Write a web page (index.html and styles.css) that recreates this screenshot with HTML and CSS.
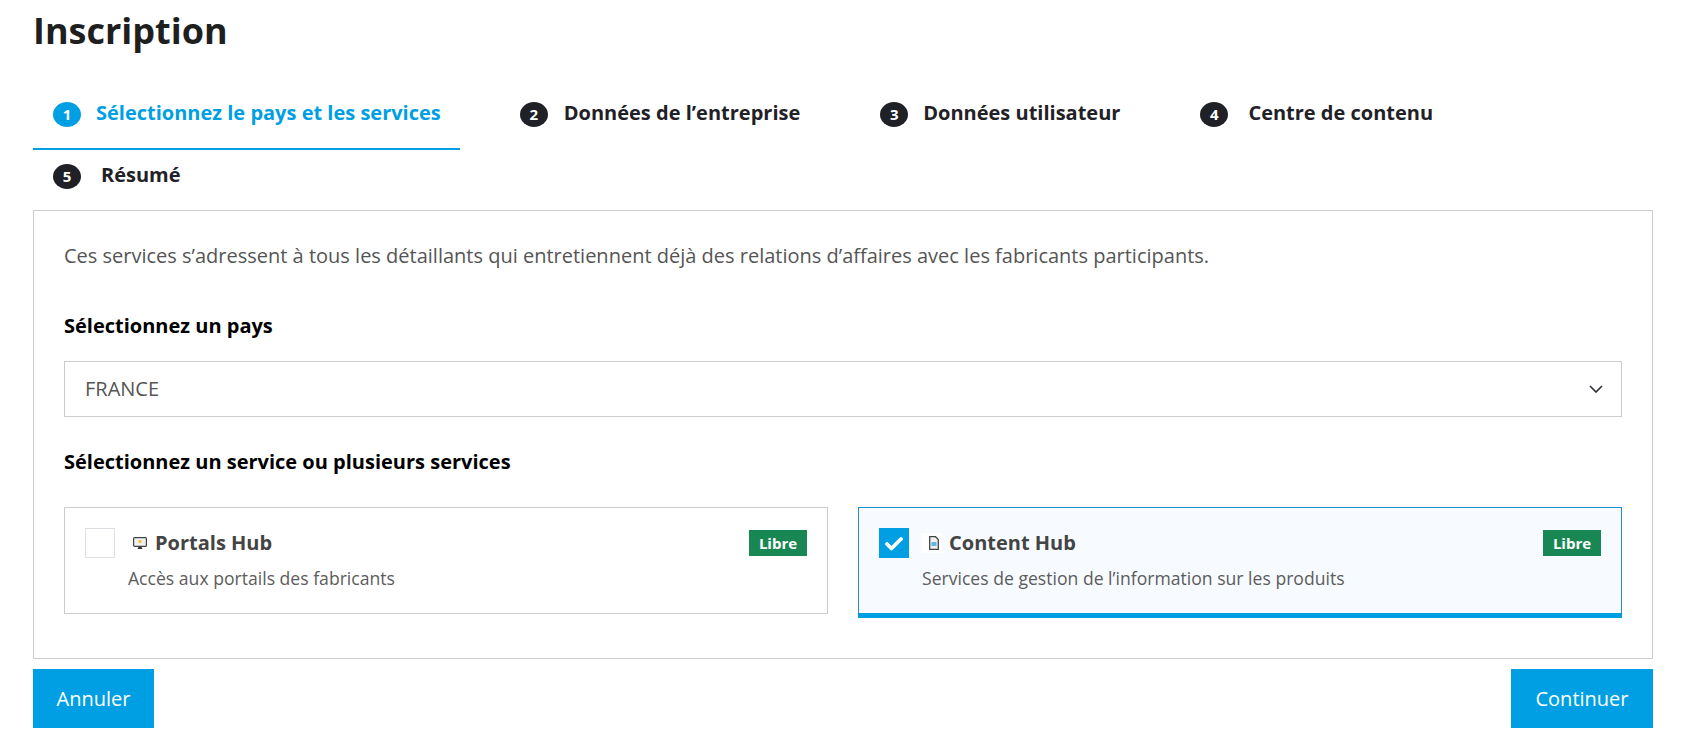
FILE: index.html
```html
<!DOCTYPE html>
<html lang="fr">
<head>
<meta charset="utf-8">
<title>Inscription</title>
<link rel="stylesheet" href="styles.css">
</head>
<body>
<h1 class="title">Inscription</h1>
<nav class="tabs">
  <a class="tab tab-active tab-gap-1"><span class="num">1</span><span class="tab-text">Sélectionnez le pays et les services</span></a>
  <a class="tab tab-gap-2"><span class="num">2</span><span class="tab-text">Données de l’entreprise</span></a>
  <a class="tab tab-gap-3"><span class="num">3</span><span class="tab-text">Données utilisateur</span></a>
  <a class="tab tab-gap-4"><span class="num">4</span><span class="tab-text">Centre de contenu</span></a>
  <a class="tab tab-last tab-gap-4"><span class="num">5</span><span class="tab-text">Résumé</span></a>
</nav>
<main class="panel">
  <p class="intro">Ces services s’adressent à tous les détaillants qui entretiennent déjà des relations d’affaires avec les fabricants participants.</p>
  <h2 class="label">Sélectionnez un pays</h2>
  <div class="select">
    <span class="select-value">FRANCE</span>
    <svg class="chevron" width="14" height="8" viewBox="0 0 14 8"><path d="M1 1l6 6 6-6" fill="none" stroke="#2b2d33" stroke-width="1.6"/></svg>
  </div>
  <h2 class="label label-services">Sélectionnez un service ou plusieurs services</h2>
  <div class="cards">
    <section class="card">
      <span class="check"></span>
      <div class="card-body">
        <div class="card-head">
          <svg class="icon-monitor" width="14" height="12" viewBox="0 0 14 12"><rect x=".6" y=".6" width="12.8" height="8.800" rx="1" fill="#f0f0ee" stroke="#444" stroke-width="1.200"/><rect x="5.500" y="3" width="3" height="3" fill="#f5c242"/><path d="M5.500 10h3l1 2h-5z" fill="#333"/></svg>
          <span class="card-title">Portals Hub</span>
          <span class="badge">Libre</span>
        </div>
        <p class="card-desc">Accès aux portails des fabricants</p>
      </div>
    </section>
    <section class="card card-selected">
      <span class="check check-on"><svg width="18" height="15" viewBox="0 0 18 15"><path d="M2 8l4.500 4.500L16 3" fill="none" stroke="#fff" stroke-width="3.800" stroke-linecap="round" stroke-linejoin="round"/></svg></span>
      <div class="card-body">
        <div class="card-head">
          <span class="icon-doc-box"><svg width="10" height="14" viewBox="0 0 10 14"><path d="M.7.7h5.800l2.800 2.800v9.800H.7z" fill="#f0f0ee" stroke="#444" stroke-width="1.300"/><rect x="2.500" y="6" width="5" height="4" fill="#5fb6e6"/></svg></span>
          <span class="card-title">Content Hub</span>
          <span class="badge">Libre</span>
        </div>
        <p class="card-desc">Services de gestion de l’information sur les produits</p>
      </div>
    </section>
  </div>
</main>
<footer class="actions">
  <button class="btn btn-cancel">Annuler</button>
  <button class="btn btn-next">Continuer</button>
</footer>
</body>
</html>
```
FILE: styles.css
```css
* { box-sizing: border-box; }
html, body { margin: 0; padding: 0; }
body {
  padding: 0 36px 18px 33px;
  font-family: "Open Sans", sans-serif;
  color: #212121;
  background: #fff;
}
.title {
  margin: 0;
  padding-top: 6px;
  font-size: 36px;
  line-height: 49px;
  font-weight: 700;
  color: #1f1f1f;
}
.tabs {
  display: flex;
  flex-wrap: wrap;
  column-gap: 40px;
  margin-top: 33px;
}
.tab {
  display: flex;
  align-items: flex-start;
  height: 62px;
  padding: 14px 20px 0;
  font-size: 20px;
  font-weight: 700;
  color: #1f2126;
  border-bottom: 2px solid transparent;
}
.tab-last { height: 60px; border-bottom: 0; }
.tab-active { padding-right: 19px; color: #009fe3; border-bottom-color: #009fe3; }
.tab-text { line-height: 22px; }
.num {
  display: flex;
  align-items: center;
  justify-content: center;
  width: 28px;
  height: 25px;
  border-radius: 50%;
  background: #1f2126;
  color: #fff;
  font-size: 15px;
  font-weight: 700;
  line-height: 1;
  flex: none;
}
.tab-active .num { background: #009fe3; }
.tab-gap-1 .num { margin-right: 15px; }
.tab-gap-2 .num { margin-right: 16px; }
.tab-gap-3 .num { margin-right: 15px; }
.tab-gap-4 .num { margin-right: 20px; }
.panel {
  height: 449px;
  border: 1px solid #ccc;
  padding: 30px 30px 0;
}
.intro {
  margin: 0;
  font-size: 20px;
  line-height: 30px;
  color: #555;
}
.label {
  margin: 41px 0 0;
  font-size: 20px;
  line-height: 28px;
  font-weight: 700;
  color: #000;
}
.select {
  display: flex;
  align-items: center;
  justify-content: space-between;
  height: 56px;
  margin-top: 21px;
  padding: 0 18px 1px 20px;
  border: 1px solid #ccc;
  font-size: 20px;
  color: #555;
}
.select-value { margin-bottom: 0; }
.label-services { margin-top: 31px; }
.cards {
  display: grid;
  grid-template-columns: 1fr 1fr;
  gap: 30px;
  align-items: start;
  margin-top: 31px;
}
.card {
  display: flex;
  height: 107px;
  padding: 20px;
  border: 1px solid #ccc;
}
.card-selected {
  height: 111px;
  border-color: #1d8fd0;
  border-bottom: 5px solid #009fe3;
  background: #f7fbff;
}
.check {
  display: flex;
  align-items: center;
  justify-content: center;
  flex: none;
  width: 30px;
  height: 30px;
  margin-right: 13px;
  border: 1px solid #dcdfe3;
  background: #fff;
}
.check-on { background: #009fe3; border-color: #009fe3; }
.card-body { flex: 1; min-width: 0; }
.card-head {
  display: flex;
  align-items: center;
  height: 28px;
  margin-top: 1px;
}
.icon-monitor { margin-left: 5px; margin-right: 8px; flex: none; }
.icon-doc-box {
  display: flex;
  align-items: center;
  justify-content: flex-end;
  width: 20px;
  height: 20px;
  padding-right: 3px;
  margin-right: 7px;
  background: #fff;
  flex: none;
}
.card-title {
  margin-bottom: 2px;
  font-size: 20px;
  font-weight: 700;
  color: #444;
}
.badge {
  margin-left: auto;
  width: 58px;
  height: 26px;
  background: #198754;
  color: #fff;
  font-size: 15px;
  font-weight: 700;
  line-height: 26px;
  text-align: center;
}
.card-desc {
  margin: 8px 0 0;
  font-size: 17.6px;
  line-height: 26px;
  color: #5c5c5c;
}
.actions {
  display: flex;
  justify-content: space-between;
  margin-top: 10px;
}
.btn {
  height: 59px;
  border: 0;
  padding: 0;
  background: #009fe3;
  color: #fff;
  font-family: inherit;
  font-size: 20px;
}
.btn-next { width: 142px; }
.btn-cancel { width: 121px; }
```
